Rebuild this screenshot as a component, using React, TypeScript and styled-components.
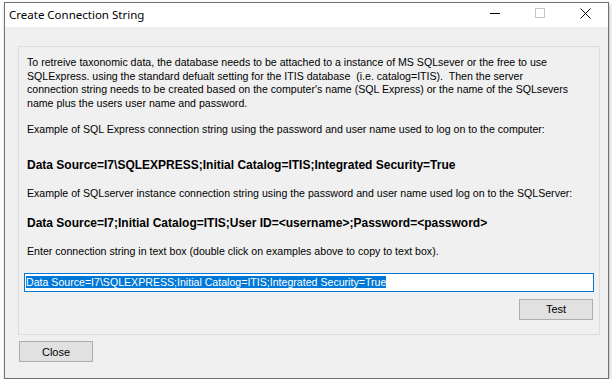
import React, { useEffect, useRef, useState } from 'react'
import styled, { createGlobalStyle } from 'styled-components'

const GlobalStyle = createGlobalStyle`
  html, body {
    margin: 0;
    padding: 0;
    background: #ffffff;
  }
  body {
    font-family: "Liberation Sans", Arial, sans-serif;
  }
`

const EXPRESS_EXAMPLE =
  'Data Source=I7\\SQLEXPRESS;Initial Catalog=ITIS;Integrated Security=True'
const SERVER_EXAMPLE =
  'Data Source=I7;Initial Catalog=ITIS;User ID=<username>;Password=<password>'

const App = (): JSX.Element => {
  const [connection, setConnection] = useState(EXPRESS_EXAMPLE)
  const inputRef = useRef<HTMLInputElement>(null)

  // keep the text selected like the focused WinForms box
  useEffect(() => {
    inputRef.current?.focus()
    inputRef.current?.select()
  }, [])

  const handleCopy = (value: string) => {
    setConnection(value)
  }

  return (
    <>
      <GlobalStyle />
      <Window>
        {/* Title bar */}
        <TitleBar>
          <Title>Create Connection String</Title>
          <Controls>
            <ControlButton aria-label="minimize">
              <svg width="10" height="10" viewBox="0 0 10 10">
                <line x1="0" y1="5.5" x2="10" y2="5.5" stroke="#000" strokeWidth="1" />
              </svg>
            </ControlButton>
            <ControlButton aria-label="maximize">
              <svg width="10" height="10" viewBox="0 0 10 10">
                <rect x="0.5" y="0.5" width="9" height="9" fill="none" stroke="#c4c4c4" strokeWidth="1" />
              </svg>
            </ControlButton>
            <ControlButton aria-label="close">
              <svg width="11" height="11" viewBox="0 0 11 11">
                <path d="M0.5 0.5 L10.5 10.5 M10.5 0.5 L0.5 10.5" stroke="#000" strokeWidth="1" />
              </svg>
            </ControlButton>
          </Controls>
        </TitleBar>

        <Body>
          <GroupBox>
            <Paragraph>
              To retreive taxonomic data, the database needs to be attached to a instance of MS SQLsever or the free to use
              <br />
              SQLExpress. using the standard defualt setting for the ITIS database&nbsp; (i.e. catalog=ITIS).&nbsp; Then the server
              <br />
              connection string needs to be created based on the computer's name (SQL Express) or the name of the SQLsevers
              <br />
              name plus the users user name and password.
            </Paragraph>

            <Label $top={13}>
              Example of SQL Express connection string using the password and user name used to log on to the computer:
            </Label>
            <Example $top={21} onDoubleClick={() => handleCopy(EXPRESS_EXAMPLE)}>
              {EXPRESS_EXAMPLE}
            </Example>

            <Label $top={15}>
              Example of SQLserver instance connection string using the password and user name used log on to the SQLServer:
            </Label>
            <Example $top={16} onDoubleClick={() => handleCopy(SERVER_EXAMPLE)}>
              {SERVER_EXAMPLE}
            </Example>

            <Label $top={15}>
              Enter connection string in text box (double click on examples above to copy to text box).
            </Label>

            <TextBox
              ref={inputRef}
              value={connection}
              onChange={(e) => setConnection(e.target.value)}
            />

            <ButtonRow>
              <Button type="button">Test</Button>
            </ButtonRow>
          </GroupBox>

          <Footer>
            <Button type="button">Close</Button>
          </Footer>
        </Body>
      </Window>
    </>
  )
}

export default App

const Window = styled.div`
  display: flex;
  flex-direction: column;
  width: 603px;
  height: 375px;
  margin: 2px 0 0 4px;
  border: 1px solid #707070;
  background-color: #f0f0f0;
  box-shadow: 1px 2px 4px rgba(0, 0, 0, 0.25);
`

const TitleBar = styled.div`
  display: flex;
  align-items: center;
  justify-content: space-between;
  height: 24px;
  background-color: #fff;
  flex-shrink: 0;
`

const Title = styled.span`
  font-family: "Noto Sans", "Open Sans", sans-serif;
  font-size: 11.5px;
  color: #000;
  padding-left: 4px;
  padding-bottom: 2px;
`

const Controls = styled.div`
  display: flex;
  align-items: center;
  height: 100%;
  padding-right: 17px;
  gap: 35px;
`

const ControlButton = styled.div`
  display: flex;
  align-items: center;
  justify-content: center;
  height: 24px;
  padding-bottom: 4px;
  box-sizing: border-box;
`

const Body = styled.div`
  display: flex;
  flex-direction: column;
  flex: 1;
  padding: 19px 8px 0 13px;
`

const GroupBox = styled.div`
  display: flex;
  flex-direction: column;
  height: 289px;
  box-sizing: border-box;
  border: 1px solid #dcdcdc;
  padding: 9px 5px 0 5px;
`

const Paragraph = styled.p`
  margin: 0;
  padding-left: 3px;
  font-size: 10.6px;
  line-height: 13.5px;
  color: #000;
  white-space: nowrap;
`

const Label = styled.div<{ $top: number }>`
  margin-top: ${(p) => p.$top}px;
  padding-left: 3px;
  font-size: 10.6px;
  line-height: 13.5px;
  color: #000;
  white-space: nowrap;
`

const Example = styled.div<{ $top: number }>`
  margin-top: ${(p) => p.$top}px;
  padding-left: 3px;
  font-size: 12px;
  font-weight: bold;
  line-height: 14px;
  color: #000;
  white-space: nowrap;
  cursor: default;
`

const TextBox = styled.input`
  margin-top: 14px;
  height: 19px;
  box-sizing: border-box;
  border: 1px solid #0078d7;
  padding: 0 1px;
  font-family: "Liberation Sans", Arial, sans-serif;
  font-size: 10.6px;
  color: #000;
  background: #fff;
  outline: none;
  caret-color: #f08000;

  &::selection {
    background: #0078d7;
    color: #fff;
  }
`

const ButtonRow = styled.div`
  display: flex;
  justify-content: flex-end;
  margin-top: 7px;
  padding-right: 1px;
`

const Button = styled.button`
  width: 74px;
  height: 21px;
  box-sizing: border-box;
  border: 1px solid #adadad;
  background-color: #e1e1e1;
  font-family: "Liberation Sans", Arial, sans-serif;
  font-size: 11px;
  color: #000;
  padding: 0;
  cursor: pointer;

  &:hover {
    background-color: #e5f1fb;
    border-color: #0078d7;
  }
`

const Footer = styled.div`
  display: flex;
  margin-top: 6px;
  padding-left: 1px;
`
